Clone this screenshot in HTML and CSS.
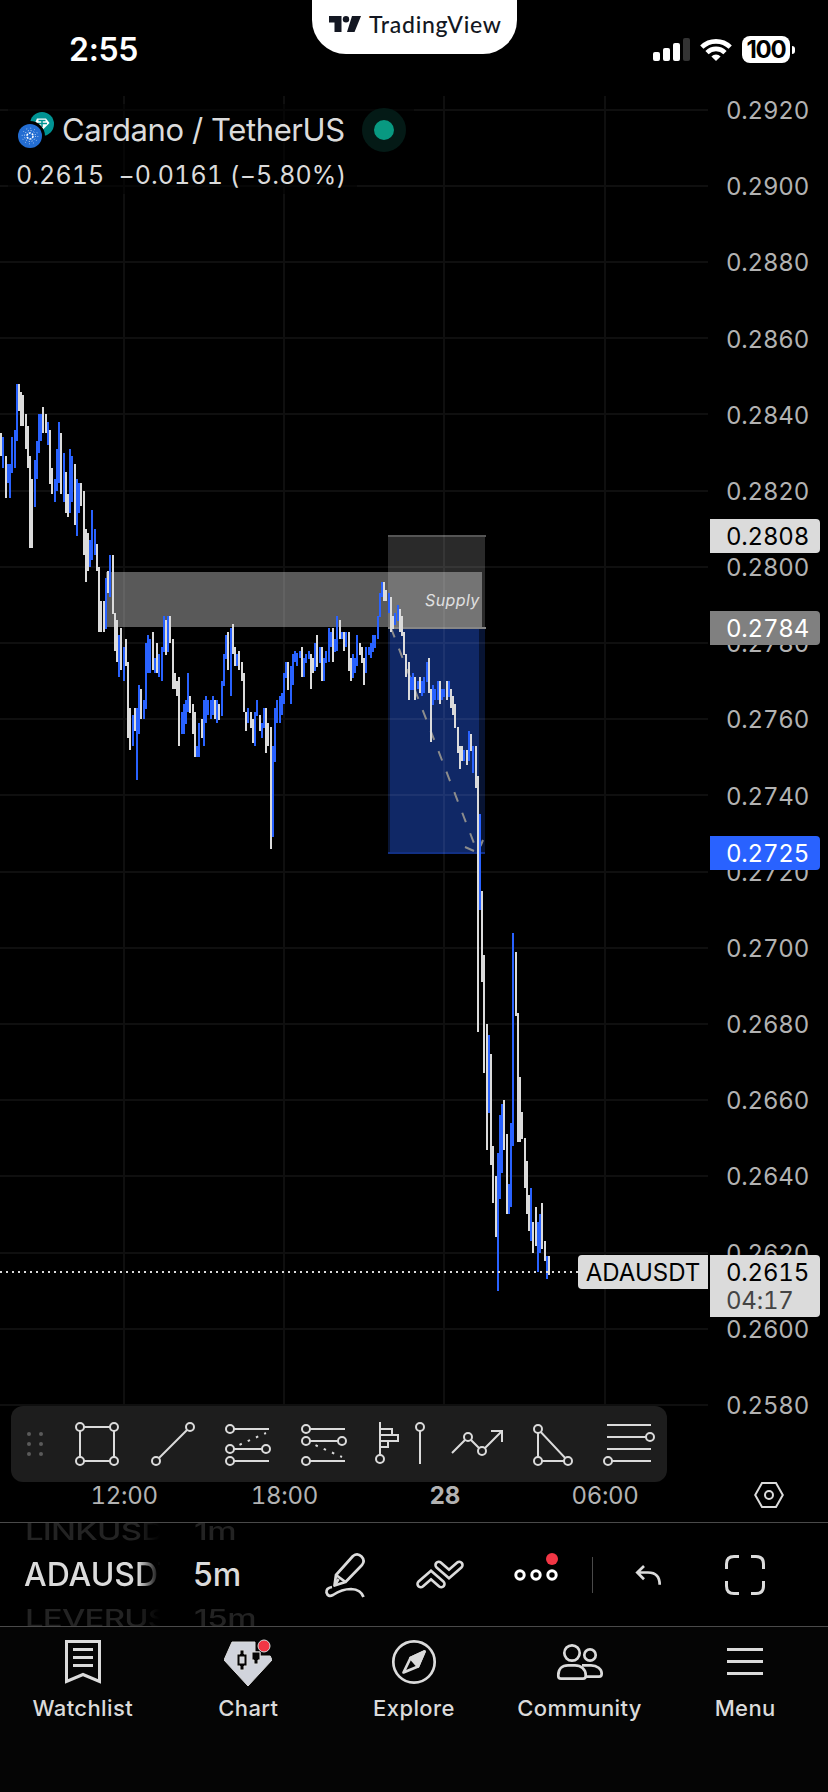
FILE: index.html
```html
<!DOCTYPE html>
<html lang="en">
<head>
    <meta charset="UTF-8">
    <meta name="viewport" content="width=device-width, initial-scale=1.0">
    <title>ADAUSDT</title>
    <link rel="stylesheet" href="styles.css">
</head>
<body>
    <header class="status-bar">
        <div class="clock">2:55</div>
        <div class="brand">
            <svg class="brand-logo" width="33" height="16" viewBox="0 0 33 16">
                <path d="M0 0H12.5V16H5.5V6.5H0Z"/>
                <circle cx="17" cy="3.3" r="3.2"/>
                <path d="M23 0H32L25.5 16H18Z"/>
            </svg>
            <span>TradingView</span>
        </div>
        <div class="indicators">
            <svg width="37" height="23" viewBox="0 0 37 23" fill="#fff">
                <rect x="0" y="14" width="7" height="9" rx="2"/>
                <rect x="10" y="10" width="7" height="13" rx="2"/>
                <rect x="20" y="5" width="7" height="18" rx="2"/>
                <rect x="30" y="0" width="7" height="23" rx="2" fill="#333"/>
            </svg>
            <svg width="32" height="23" viewBox="0 0 32 23" fill="none" stroke="#fff" stroke-width="4.6">
                <path d="M1.8 9.2A20.3 20.3 0 0 1 30.2 9.2"/>
                <path d="M7 14.6A12.8 12.8 0 0 1 25 14.6"/>
                <path d="M16 23L11.4 18.4A6.6 6.6 0 0 1 20.6 18.4Z" fill="#fff" stroke="none"/>
            </svg>
            <div class="battery">100</div>
        </div>
    </header>

    <main class="chart">
        <div class="plot">
            <svg class="plot-canvas" width="710" height="1310" viewBox="0 96 710 1310">
                <rect class="supply" x="106" y="572" width="376" height="55"/>
                <rect class="stop" x="388" y="536" width="97" height="92"/>
                <rect class="target" x="388" y="628" width="97" height="225"/>
                <rect class="target-inner" x="390" y="629" width="89" height="224"/>
                <path class="stop-line" d="M388 536H486"/>
                <path class="entry-line" d="M388 628H486"/>
                <path class="target-line" d="M388 853H485"/>
                <path class="grid" d="M0 110H708M0 186H708M0 262H708M0 338H708M0 414H708M0 491H708M0 567H708M0 643H708M0 719H708M0 795H708M0 872H708M0 948H708M0 1024H708M0 1100H708M0 1176H708M0 1253H708M0 1329H708M0 1405H708M124 96V1406M284 96V1406M444 96V1406M605 96V1406"/>
                <path class="trend" stroke-dasharray="10 12" d="M391 628L477 851"/>
                <path class="trend" d="M465 847L474 851M483 840L480.500 846"/>
                <text class="supply-text" x="425" y="606">Supply</text>
                <path class="bar up" d="M3 437V468M8 464V483M10 464V498M12 437V473M15 430V468M17 384V441M35 460V507M37 441V479M39 414V453M41 414V441M48 422V445M55 479V502M57 449V491M59 422V483M64 453V502M70 449V513M72 456V502M77 479V536M79 483V513M90 540V567M92 510V560M95 529V555M106 578V629M110 555V597
                    M119 635V677M124 647V681M133 715V746M137 708V780M139 685V734M144 700V719M146 643V709M148 635V673M150 639V673M155 658V673M159 654V677M162 647V681M164 616V652M168 616V652M182 712V734M184 704V734M186 700V724M188 673V712M197 746V757M199 723V757
                    M204 700V746M206 696V723M208 700V715M211 700V719M213 696V715M217 700V723M222 681V716M224 654V686M226 635V659M231 628V696M237 654V666M248 708V723M255 712V746M257 700V716M262 723V738M264 708V728M273 746V837M275 708V762M277 700V723M280 696V723M282 693V715M284 673V704M286 662V678
                    M291 666V704M293 654V685M295 651V662M297 653V666M300 651V658M304 658V677M306 654V663M309 651V659M315 643V671M320 647V663M324 658V681M326 651V663M329 628V662M331 632V647M335 639V652M337 616V651M342 632V639M346 632V647M353 654V678M355 658V673M357 635V666M366 647V673M369 647V655M371 643V658M373 635V652M375 635V648M378 616V639M380 593V617M382 582V597M389 593V613M395 613V625M398 605V621
                    M411 677V690M413 673V690M418 681V689M422 681V696M424 677V693M427 662V682M433 685V705M435 689V700M438 681V700M442 689V700M444 689V697M449 681V697M464 750V761M469 731V761M473 746V773M480 814V910M489 1035V1113M498 1153V1291M500 1115V1199M502 1104V1173M509 1184V1214M511 1123V1207M513 933V1146M531 1188V1241M538 1222V1272M540 1214V1253M547 1256V1279"/>
                <path class="bar down" d="M1 433V456M6 456V498M19 384V411M21 392V426M23 395V426M26 414V449M28 426V468M30 456V548M32 479V548M43 407V433M46 414V433M50 430V484M52 468V494M61 433V494M66 472V513M68 494V517M75 464V525M81 483V506M84 491V555M86 529V582M88 533V571M97 544V571M99 567V632M101 601V632M104 601V632M108 571V593M113 555V614M115 613V651M117 620V662
                    M121 628V670M126 639V666M128 662V738M130 708V750M135 708V731M141 689V719M153 632V670M157 643V673M166 620V655M170 616V643M173 639V689M175 673V689M177 681V696M179 677V746M190 696V713M193 704V734M195 712V757M202 719V738M215 700V719M219 704V720M228 632V670M233 624V654M235 647V666M239 651V670M242 662V681M244 673V712M246 712V731M251 712V728M253 719V743M260 715V731M266 708V753M268 723V746M271 727V849M288 662V690
                    M302 647V677M311 654V689M313 658V673M317 635V667M322 647V681M333 628V662M340 620V639M344 632V651M349 632V671M351 658V681M360 643V655M362 647V663M364 658V685M384 582V601M386 590V601M391 597V632M393 616V629M400 609V632M402 616V636M404 632V655M406 654V677M409 662V700M415 677V700M420 677V693M429 658V693M431 689V742M440 681V704M447 681V700M451 689V708M453 696V715M455 704V728M458 727V753M460 746V769M462 746V761M467 750V765M471 734V751M476 746V788
                    M478 776V1032M482 891V982M484 955V1073M487 1024V1150M491 1054V1165M493 1146V1203M496 1176V1237M504 1100V1150M507 1134V1214M516 952V1016M518 1013V1142M520 1077V1142M522 1112V1139M525 1138V1188M527 1161V1214M529 1195V1231M533 1222V1253M536 1207V1246M542 1203V1249M545 1241V1261M549 1256V1275"/>
                <path class="last-price" d="M0 1272H578"/>
            </svg>

            <div class="legend">
                <div class="legend-title">
                    <svg width="38" height="38" viewBox="0 0 38 38">
                        <circle cx="25" cy="13" r="12" fill="#009393"/>
                        <path d="M20 7.500H29L32.500 12L25 19.500L18 12Z" fill="#fff"/>
                        <path d="M21.500 9.500H28.500M25 9.500V16M20.500 12.500H30" fill="none" stroke="#009393" stroke-width="1.500"/>
                        <circle cx="13" cy="25" r="15" fill="#000"/>
                        <circle cx="13" cy="25" r="12" fill="#236dd2"/>
                        <g fill="none" stroke="#fff">
                            <circle cx="13" cy="25" r="3" stroke-width="1.600" stroke-dasharray="2 1.140"/>
                            <circle cx="13" cy="25" r="5.500" stroke-width="1" stroke-dasharray="1 1.880" opacity=".8"/>
                            <circle cx="13" cy="25" r="7.800" stroke-width="1" stroke-dasharray="1 3.080" opacity=".6"/>
                        </g>
                    </svg>
                    <span class="symbol-name">Cardano / TetherUS</span>
                    <span class="market-open"></span>
                </div>
                <div class="legend-values">
                    <span>0.2615</span><span>−0.0161 (−5.80%)</span>
                </div>
            </div>
            <div class="symbol-tag">ADAUSDT</div>
        </div>

        <div class="price-axis">
            <span>0.2920</span>
            <span>0.2900</span>
            <span>0.2880</span>
            <span>0.2860</span>
            <span>0.2840</span>
            <span>0.2820</span>
            <span>0.2800</span>
            <span>0.2780</span>
            <span>0.2760</span>
            <span>0.2740</span>
            <span>0.2720</span>
            <span>0.2700</span>
            <span>0.2680</span>
            <span>0.2660</span>
            <span>0.2640</span>
            <span>0.2620</span>
            <span>0.2600</span>
            <span>0.2580</span>
            <div class="price-tag tag-stop">0.2808</div>
            <div class="price-tag tag-entry">0.2784</div>
            <div class="price-tag tag-target">0.2725</div>
            <div class="price-tag tag-last">0.2615<span class="countdown">04:17</span></div>
        </div>
    </main>

    <section class="draw-tools">
        <svg class="handle" width="48" height="76" viewBox="0 0 48 76" fill="#5a5a5a">
            <circle cx="18" cy="28" r="2"/><circle cx="30" cy="28" r="2"/>
            <circle cx="18" cy="38" r="2"/><circle cx="30" cy="38" r="2"/>
            <circle cx="18" cy="48" r="2"/><circle cx="30" cy="48" r="2"/>
        </svg>
        <svg class="tool" viewBox="0 0 76 76">
            <path d="M21 21H55V55H21Z"/>
            <circle cx="21" cy="21" r="4"/><circle cx="55" cy="21" r="4"/><circle cx="21" cy="55" r="4"/><circle cx="55" cy="55" r="4"/>
        </svg>
        <svg class="tool" viewBox="0 0 76 76">
            <path d="M21 55L55 21"/>
            <circle cx="21" cy="55" r="4"/><circle cx="55" cy="21" r="4"/>
        </svg>
        <svg class="tool" viewBox="0 0 76 76">
            <path d="M19 23H58M19 43H55M19 55H58"/>
            <path class="dots" d="M28.500 38.800L55 27"/>
            <circle cx="19" cy="23" r="4"/><circle cx="19" cy="43" r="4"/><circle cx="55" cy="43" r="4"/><circle cx="19" cy="55" r="4"/>
        </svg>
        <svg class="tool" viewBox="0 0 76 76">
            <path d="M19 23H58M19 35H55M19 55H58"/>
            <path class="dots" d="M28.500 39.200L55 51"/>
            <circle cx="19" cy="23" r="4"/><circle cx="19" cy="35" r="4"/><circle cx="55" cy="35" r="4"/><circle cx="19" cy="55" r="4"/>
        </svg>
        <svg class="tool" viewBox="0 0 76 76">
            <path d="M17 16V50M17 23H29V29M17 29H35V35H17M25 35V41H17M57 21V58"/>
            <circle cx="17" cy="53" r="4"/><circle cx="57" cy="21" r="4"/>
        </svg>
        <svg class="tool" viewBox="0 0 76 76">
            <path d="M13 47L29 31L43 45L63 25M52 25H63V36"/>
            <circle cx="29" cy="31" r="4"/><circle cx="43" cy="45" r="4"/>
        </svg>
        <svg class="tool" viewBox="0 0 76 76">
            <path d="M23 23V55H53Z"/>
            <circle cx="23" cy="23" r="4"/><circle cx="23" cy="55" r="4"/><circle cx="53" cy="55" r="4"/>
        </svg>
        <svg class="tool" viewBox="0 0 76 76">
            <path d="M16 19H60M16 31H60M16 43H60M16 55H60"/>
            <circle cx="59" cy="31" r="4"/><circle cx="17" cy="55" r="4"/>
        </svg>
    </section>

    <section class="time-axis">
        <span>12:00</span>
        <span>18:00</span>
        <span class="day">28</span>
        <span>06:00</span>
        <svg class="axis-settings" width="30" height="28" viewBox="0 0 30 28" fill="none" stroke="#dbdbdb" stroke-width="2">
            <path d="M8 2H22L28.800 14L22 26H8L1.200 14Z"/>
            <circle cx="15" cy="14" r="4"/>
        </svg>
    </section>

    <section class="chart-bar">
        <div class="picker picker-symbol">
            <span class="side">LINKUSDT</span>
            <span class="current">ADAUSDT</span>
            <span class="side">LEVERUSDT</span>
        </div>
        <div class="picker picker-interval">
            <span class="side">1m</span>
            <span class="current">5m</span>
            <span class="side">15m</span>
        </div>
        <div class="actions">
            <svg width="44" height="48" viewBox="323 1549 44 48" fill="none" stroke="#dbdbdb" stroke-width="2.700" stroke-linejoin="round">
                <path d="M334.500 1583.500L336 1573L353 1554Q357.500 1550.500 361.500 1554.500Q365.500 1558.500 362 1563L345.500 1580Z"/>
                <path d="M336 1573L345.500 1580M335 1583L338.500 1577"/>
                <path d="M332 1585Q326 1586 326.500 1590.500Q328 1595.500 333 1593C339 1589 344 1587 351 1587Q361 1587.500 363.500 1595"/>
            </svg>
            <svg width="50" height="30" viewBox="415 1559 50 30" fill="none" stroke-linecap="round">
                <path d="M420.700 1583L431 1574L441.300 1583" stroke="#dbdbdb" stroke-width="9"/>
                <path d="M420.700 1583L431 1574L441.300 1583" stroke="#000" stroke-width="3.800"/>
                <path d="M438.700 1564L449 1573L459.300 1564" stroke="#dbdbdb" stroke-width="9"/>
                <path d="M438.700 1564L449 1573L459.300 1564" stroke="#000" stroke-width="3.800"/>
            </svg>
            <svg width="46" height="46" viewBox="513 1551 46 46" fill="none" stroke="#fff" stroke-width="3">
                <circle cx="520" cy="1574" r="4.200"/><circle cx="536" cy="1574" r="4.200"/><circle cx="552" cy="1574" r="4.200"/>
                <circle cx="552" cy="1558" r="6" fill="#f23645" stroke="none"/>
            </svg>
            <span class="divider"></span>
            <svg width="28" height="24" viewBox="634 1562 28 24" fill="none" stroke="#dbdbdb" stroke-width="2.700">
                <path d="M644 1565L637.300 1571.500L644 1578.200M637.500 1571.500H648Q659.700 1571.500 659.700 1583.800"/>
            </svg>
            <svg width="40" height="40" viewBox="0 0 40 40" fill="none" stroke="#dbdbdb" stroke-width="3">
                <path d="M1.500 14V9Q1.500 1.500 9 1.500H14M26 1.500H31Q38.500 1.500 38.500 9V14M38.500 26V31Q38.500 38.500 31 38.500H26M14 38.500H9Q1.500 38.500 1.500 31V26"/>
            </svg>
        </div>
    </section>

    <nav class="tab-bar">
        <a class="tab">
            <svg class="tab-icon" viewBox="58 1638 48 50" stroke-width="3">
                <path d="M65.500 1641.500H98.500V1681.500L82 1674.500L65.500 1681.500Z"/>
                <path d="M72 1649.500H92M72 1657.500H92M72 1665.500H92"/>
            </svg>
            Watchlist
        </a>
        <a class="tab">
            <svg class="tab-icon" viewBox="225 1638 48 50" stroke="none">
                <path d="M233 1642H256V1652H261V1656H271.200L273 1660L249 1686L225 1660Z" fill="#d1d4dc"/>
                <path d="M241 1650H245V1654H248V1666H245V1670H241V1666H238V1654H241ZM253 1652H261V1660H259V1664H255V1660H253Z" fill="#050505"/>
                <rect x="241" y="1657" width="4" height="6" fill="#d1d4dc"/>
                <circle cx="265" cy="1646" r="6" fill="#f23645"/>
            </svg>
            Chart
        </a>
        <a class="tab">
            <svg class="tab-icon" viewBox="389 1638 48 50" stroke-width="2.700" stroke-linejoin="round">
                <circle cx="413" cy="1662" r="20.700"/>
                <path d="M423.500 1651.500L409.500 1658L402.500 1672.500L417 1666.500Z"/>
                <path d="M423.500 1651.500L409.500 1658L417 1666.500Z" fill="#dbdbdb"/>
            </svg>
            Explore
        </a>
        <a class="tab">
            <svg class="tab-icon" viewBox="555 1638 48 50" stroke-width="2.700">
                <circle cx="571" cy="1653" r="7.700"/>
                <circle cx="589" cy="1655" r="5.700"/>
                <path d="M557.300 1675C557.300 1669 561 1665.300 567 1665.300H574C580 1665.300 584.700 1669 584.700 1675V1676Q584.700 1678.700 582 1678.700H560Q557.300 1678.700 557.300 1676Z"/>
                <path d="M581 1665.300H590C596 1665.300 600.700 1669 600.700 1673.500Q600.700 1676.700 598 1676.700H585"/>
            </svg>
            Community
        </a>
        <a class="tab">
            <svg class="tab-icon" viewBox="720 1638 48 50" stroke-width="3">
                <path d="M726 1649.500H762M726 1661.500H762M726 1673.500H762"/>
            </svg>
            Menu
        </a>
    </nav>
</body>
</html>
```
FILE: styles.css
```css
* {
    box-sizing: border-box;
}

body {
    margin: 0;
    width: 828px;
    height: 1792px;
    overflow: hidden;
    background: #000;
    color: #dbdbdb;
    font-family: Inter, "Liberation Sans", sans-serif;
}

svg {
    display: block;
    flex: none;
}

/* status bar */
.status-bar {
    display: flex;
    justify-content: space-between;
    height: 96px;
    padding: 0 33px 0 69px;
}

.clock {
    width: 243px;
    padding-top: 30px;
    color: #fff;
    font-size: 32px;
    font-weight: 600;
    line-height: 40px;
    letter-spacing: -0.3px;
}

.brand {
    display: flex;
    align-items: center;
    gap: 7px;
    width: 205px;
    height: 54px;
    padding: 0 0 6px 17px;
    border-radius: 0 0 34px 34px;
    background: #fff;
    color: #131722;
    font-family: Lato, sans-serif;
    font-size: 23px;
    font-weight: 500;
    letter-spacing: 0.7px;
}

.brand-logo {
    fill: #131722;
}

.indicators {
    display: flex;
    align-items: center;
    justify-content: flex-end;
    gap: 10px;
    width: 278px;
    height: 99px;
}

.battery {
    position: relative;
    width: 48px;
    height: 27px;
    margin-right: 5px;
    border-radius: 8px;
    background: #fff;
    color: #000;
    font-size: 24px;
    font-weight: 700;
    line-height: 27px;
    letter-spacing: -1.2px;
    text-align: center;
}

.battery::after {
    content: "";
    position: absolute;
    top: 10px;
    right: -5px;
    width: 3px;
    height: 8px;
    border-radius: 0 4px 4px 0;
    background: #fff;
}

/* chart */
.chart {
    display: grid;
    grid-template-columns: 710px 118px;
    height: 1310px;
}

.plot {
    position: relative;
}

.grid {
    fill: none;
    stroke: rgba(255, 255, 255, 0.06);
    stroke-width: 2;
}

.supply {
    fill: rgba(255, 255, 255, 0.35);
}

.stop {
    fill: rgba(255, 255, 255, 0.165);
}

.target {
    fill: rgba(41, 98, 255, 0.2);
}

.target-inner {
    fill: rgba(41, 98, 255, 0.25);
}

.stop-line {
    stroke: #555;
    stroke-width: 2;
}

.entry-line {
    stroke: #868686;
    stroke-width: 2;
}

.target-line {
    stroke: #123084;
    stroke-width: 2;
}

.trend {
    fill: none;
    stroke: #8c8c8c;
    stroke-width: 2;
}

.supply-text {
    fill: #e0e0e0;
    font-size: 16px;
    font-style: italic;
    letter-spacing: 0.4px;
}

.bar {
    fill: none;
    stroke-width: 2;
    shape-rendering: crispEdges;
}

.up {
    stroke: #2962ff;
}

.down {
    stroke: #dbdbdb;
}

.last-price {
    stroke: #dbdbdb;
    stroke-width: 2;
    stroke-dasharray: 2 4;
}

.legend {
    position: absolute;
    top: 8px;
    left: 8px;
}

.legend-title {
    display: flex;
    align-items: center;
    width: 406px;
    height: 52px;
    padding-left: 9px;
    background: rgba(0, 0, 0, 0.6);
}

.symbol-name {
    width: 307px;
    padding: 0 0 2px 7px;
    font-size: 31px;
    letter-spacing: -0.4px;
    white-space: nowrap;
}

.market-open {
    flex: none;
    width: 44px;
    height: 44px;
    border: 12px solid #041a16;
    border-radius: 50%;
    background: #089981;
}

.legend-values {
    display: flex;
    gap: 14px;
    width: 349px;
    height: 38px;
    padding-left: 8px;
    background: rgba(0, 0, 0, 0.6);
    font-size: 25px;
    font-variant-numeric: tabular-nums;
    line-height: 39px;
    letter-spacing: 0.1px;
    white-space: nowrap;
}

.symbol-tag {
    position: absolute;
    top: 1159px;
    left: 578px;
    width: 130px;
    height: 34px;
    border-radius: 4px 0 0 4px;
    background: #dbdbdb;
    color: #000;
    font-size: 24px;
    line-height: 35px;
    text-align: center;
}

.price-axis {
    position: relative;
    display: flex;
    flex-direction: column;
    justify-content: space-between;
    height: 1324px;
    padding-top: 1px;
    color: #b2b2b2;
    font-size: 24px;
    font-variant-numeric: tabular-nums;
    line-height: 28px;
    letter-spacing: -0.2px;
}

.price-axis > span {
    padding-left: 16px;
}

.price-tag {
    position: absolute;
    left: 0;
    width: 110px;
    height: 34px;
    padding-left: 16px;
    border-radius: 0 4px 4px 0;
    line-height: 35px;
}

.tag-stop {
    top: 423px;
    background: #dbdbdb;
    color: #000;
}

.tag-entry {
    top: 515px;
    background: #808080;
    color: #fff;
}

.tag-target {
    top: 740px;
    background: #2962ff;
    color: #fff;
}

.tag-last {
    top: 1159px;
    height: 62px;
    background: #dbdbdb;
    color: #000;
}

.countdown {
    display: block;
    color: #444;
    line-height: 22px;
}

/* drawing tools */
.draw-tools {
    position: relative;
    display: flex;
    width: 656px;
    height: 76px;
    margin-left: 11px;
    border-radius: 12px;
    background: #1d1d1d;
}

.tool {
    width: 76px;
    height: 76px;
    fill: none;
    stroke: #dbdbdb;
    stroke-width: 2;
}

.tool circle {
    fill: #1d1d1d;
}

.tool .dots {
    stroke-dasharray: 2.500 6.500;
}

.time-axis {
    display: flex;
    height: 40px;
    padding-left: 44px;
    color: #b2b2b2;
    font-size: 24px;
    font-variant-numeric: tabular-nums;
    line-height: 28px;
    letter-spacing: -0.3px;
}

.time-axis span {
    width: 160.3px;
    text-align: center;
}

.day {
    font-weight: 700;
}

.axis-settings {
    margin: -1px 0 0 69px;
}

/* symbol / interval / actions */
.chart-bar {
    display: flex;
    height: 105px;
    border-top: 1px solid #4a4a4a;
    border-bottom: 1px solid #4a4a4a;
}

.picker {
    display: flex;
    flex-direction: column;
    justify-content: center;
    height: 103px;
    overflow: hidden;
    white-space: nowrap;
}

.picker span {
    flex: none;
    transform-origin: left center;
}

.picker-symbol {
    width: 160px;
    padding-left: 24px;
    -webkit-mask-image: linear-gradient(to right, #000 138px, transparent 160px);
    mask-image: linear-gradient(to right, #000 138px, transparent 160px);
}

.picker-interval {
    width: 130px;
    padding-left: 33px;
}

.current {
    font-size: 32px;
    font-weight: 500;
    line-height: 44px;
}

.side {
    height: 43px;
    color: #232323;
    font-size: 33px;
    font-weight: 500;
    line-height: 43px;
    letter-spacing: -0.4px;
    transform: scaleY(0.74);
}

.picker-symbol .side {
    padding-left: 1px;
    letter-spacing: -0.8px;
}

.picker-interval .side {
    padding-left: 1px;
}

.actions {
    display: flex;
    align-items: center;
    padding-left: 33px;
}

.actions svg:nth-child(2) {
    margin-left: 48px;
}

.actions svg:nth-child(3) {
    margin-left: 48px;
}

.divider {
    width: 1px;
    height: 36px;
    margin: 0 41px 0 33px;
    background: #4a4a4a;
}

.actions svg:last-child {
    margin-left: 63px;
}

/* bottom tabs */
.tab-bar {
    display: flex;
    height: 165px;
    padding-top: 11px;
    background: #050505;
}

.tab {
    display: flex;
    flex: 1;
    flex-direction: column;
    align-items: center;
    gap: 7px;
    font-size: 22px;
    font-weight: 500;
    line-height: 26px;
    letter-spacing: 0.4px;
}

.tab-icon {
    width: 48px;
    height: 50px;
    fill: none;
    stroke: #dbdbdb;
}
```
